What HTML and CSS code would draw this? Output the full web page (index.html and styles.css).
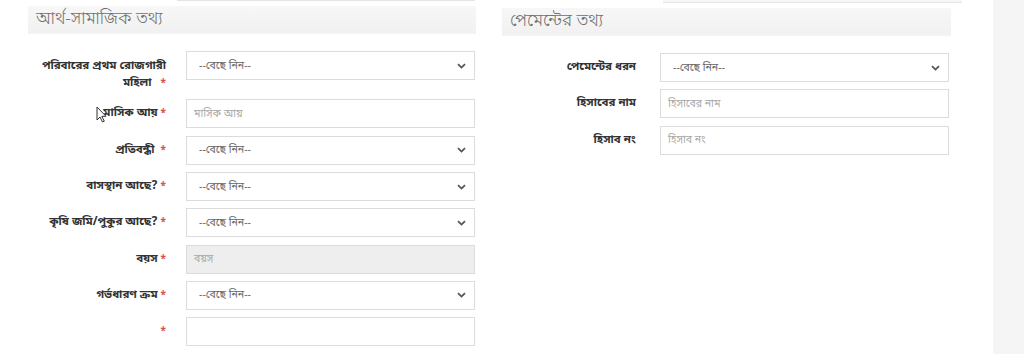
FILE: index.html
```html
<!DOCTYPE html>
<html lang="bn">
<head>
<meta charset="utf-8">
<title>ফর্ম</title>
<link rel="stylesheet" href="styles.css">
</head>
<body>
<div class="page">
  <section class="col col-left">
    <div class="stub stub-left"></div>
    <h2 class="head">আর্থ-সামাজিক তথ্য</h2>
    <div class="row">
      <label class="lbl lbl-two"><span class="l1">পরিবারের প্রথম রোজগারী</span><span class="l2">মহিলা<span class="req">*</span></span></label>
      <div class="sel"><span>--বেছে নিন--</span><svg class="chev" width="9" height="6" viewBox="0 0 9 6"><path d="M1 1.2 L4.5 4.6 L8 1.2" fill="none" stroke="#555" stroke-width="1.8"/></svg></div>
    </div>
    <div class="row">
      <label class="lbl">মাসিক আয় <span class="req">*</span></label>
      <div class="inp"><span class="ph">মাসিক আয়</span></div>
    </div>
    <div class="row">
      <label class="lbl">প্রতিবন্ধী &nbsp;<span class="req">*</span></label>
      <div class="sel"><span>--বেছে নিন--</span><svg class="chev" width="9" height="6" viewBox="0 0 9 6"><path d="M1 1.2 L4.5 4.6 L8 1.2" fill="none" stroke="#555" stroke-width="1.8"/></svg></div>
    </div>
    <div class="row">
      <label class="lbl">বাসস্থান আছে? <span class="req">*</span></label>
      <div class="sel"><span>--বেছে নিন--</span><svg class="chev" width="9" height="6" viewBox="0 0 9 6"><path d="M1 1.2 L4.5 4.6 L8 1.2" fill="none" stroke="#555" stroke-width="1.8"/></svg></div>
    </div>
    <div class="row">
      <label class="lbl">কৃষি জমি/পুকুর আছে? <span class="req">*</span></label>
      <div class="sel"><span>--বেছে নিন--</span><svg class="chev" width="9" height="6" viewBox="0 0 9 6"><path d="M1 1.2 L4.5 4.6 L8 1.2" fill="none" stroke="#555" stroke-width="1.8"/></svg></div>
    </div>
    <div class="row">
      <label class="lbl">বয়স <span class="req">*</span></label>
      <div class="inp inp-dis"><span class="ph">বয়স</span></div>
    </div>
    <div class="row">
      <label class="lbl">গর্ভধারণ ক্রম <span class="req">*</span></label>
      <div class="sel"><span>--বেছে নিন--</span><svg class="chev" width="9" height="6" viewBox="0 0 9 6"><path d="M1 1.2 L4.5 4.6 L8 1.2" fill="none" stroke="#555" stroke-width="1.8"/></svg></div>
    </div>
    <div class="row">
      <label class="lbl"><span class="req">*</span></label>
      <div class="inp"></div>
    </div>
    <div class="next-head"></div>
  </section>

  <section class="col col-right">
    <div class="stub stub-right"></div>
    <h2 class="head">পেমেন্টের তথ্য</h2>
    <div class="row">
      <label class="lbl lbl-r">পেমেন্টের ধরন</label>
      <div class="sel"><span>--বেছে নিন--</span><svg class="chev" width="9" height="6" viewBox="0 0 9 6"><path d="M1 1.2 L4.5 4.6 L8 1.2" fill="none" stroke="#555" stroke-width="1.8"/></svg></div>
    </div>
    <div class="row">
      <label class="lbl lbl-r">হিসাবের নাম</label>
      <div class="inp"><span class="ph">হিসাবের নাম</span></div>
    </div>
    <div class="row">
      <label class="lbl lbl-r">হিসাব নং</label>
      <div class="inp"><span class="ph">হিসাব নং</span></div>
    </div>
  </section>

  <aside class="side"></aside>

  <svg class="cursor" width="11" height="17" viewBox="0 0 11 17"><path d="M1 1 L1 14 L4 11 L6.5 16 L8.3 15.2 L5.8 10.3 L10 10.3 Z" fill="#fff" stroke="#333" stroke-width="1" stroke-linejoin="round"/></svg>
</div>
</body>
</html>
```

FILE: styles.css
```css
* { box-sizing: border-box; }
html, body { margin: 0; padding: 0; background: #fff; }
body {
  font-family: "Noto Sans Bengali", "Noto Serif Bengali", "Lohit Bengali", "Noto Sans", sans-serif;
  color: #333;
}
.page {
  position: relative;
  width: 1024px;
  height: 354px;
  overflow: hidden;
  display: flex;
  padding-left: 28px;
}
.col { display: flex; flex-direction: column; }
.col-left { width: 448px; }
.col-right { width: 449px; margin-left: 26px; }
.side {
  width: 31px;
  margin-left: auto;
  background: #f5f5f5;
}
.stub {
  height: 3px;
  background: #f6f6f6;
  border-bottom: 1px solid #e4e4e4;
}
.stub-left { margin-left: 149px; width: 298px; }
.stub-right { margin-left: 161px; width: 299px; }
.head {
  margin: 5px 0 18px 0;
  height: 27px;
  padding-left: 8px;
  background: linear-gradient(#f7f7f7, #f1f1f1);
  box-shadow: 0 1px 1px rgba(0,0,0,0.04);
  font-size: 17px;
  font-weight: 300;
  color: #6f6f6f;
  line-height: 27px;
  white-space: nowrap;
}
.row {
  display: flex;
  align-items: flex-start;
  margin-bottom: 7.3px;
}
.lbl {
  width: 158px;
  flex: none;
  padding: 6px 20px 0 12px;
  text-align: right;
  font-size: 11.5px;
  font-weight: 700;
  line-height: 17px;
  color: #333;
}
.lbl-two { padding-top: 7px; display: flex; flex-direction: column; align-items: flex-end; }
.lbl-two .l1, .lbl-two .l2 { display: block; }
.lbl-two .req { margin-left: 9px; }
.lbl-r { padding-right: 24px; }
.req { color: #d9534f; font-size: 10px; }
.sel, .inp {
  width: 289px;
  height: 29px;
  flex: none;
  border: 1px solid #dcdcdc;
  background: #fff;
  display: flex;
  align-items: center;
  font-size: 10.5px;
}
.sel {
  padding: 0 8px 0 12px;
  justify-content: space-between;
  color: #666;
}
.inp { padding: 0 7px; }
.inp-dis { background: #eeeeee; }
.ph { color: #a8a8a8; }
.chev { display: block; }
.next-head {
  height: 6px;
  background: linear-gradient(#f3f3f3, #fafafa);
}
.cursor {
  position: absolute;
  left: 96px;
  top: 106px;
}
```
